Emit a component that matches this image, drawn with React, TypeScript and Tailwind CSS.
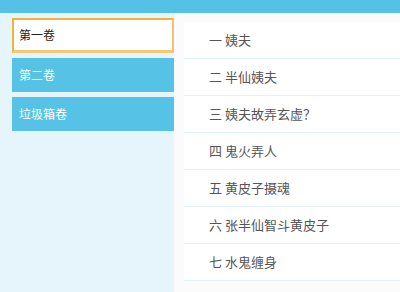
import React from "react";

const chapters = [
  "一 姨夫",
  "二 半仙姨夫",
  "三 姨夫故弄玄虚？",
  "四 鬼火弄人",
  "五 黄皮子摄魂",
  "六 张半仙智斗黄皮子",
  "七 水鬼缠身",
];

export default function App() {
  return (
    <div
      className="w-[400px] h-[292px] overflow-hidden bg-white"
      style={{ fontFamily: '"Noto Sans CJK SC", "Noto Sans", sans-serif' }}
    >
      <div className="h-[13px] bg-[#55c1e6]" />
      <div className="flex h-[279px]">
        <div className="w-[174px] bg-[#e5f5fb] pl-[12px] pt-[5px] flex flex-col gap-[5px]">
          <div className="h-[35px] bg-white border-t-2 border-l-2 border-r-2 border-b-[3px] border-t-[#f1b33c] border-l-[#f1b33c] border-r-[#f3c170] border-b-[#f5c878] flex items-center pl-[5px] text-[12px] text-[#222]">
            第一卷
          </div>
          <div className="h-[34px] bg-[#56c3e6] flex items-center pl-[7px] text-[12px] text-white">
            第二卷
          </div>
          <div className="h-[34px] bg-[#56c3e6] flex items-center pl-[7px] text-[12px] text-white">
            垃圾箱卷
          </div>
        </div>
        <div className="flex-1 bg-[#fbfbfb] pl-[10px] pt-[9px]">
          {chapters.map((c) => (
            <div
              key={c}
              className="h-[37px] bg-white border-b border-[#e2f2f8] flex items-center pl-[25px] text-[13px] text-[#555] whitespace-pre"
            >
              {c}
            </div>
          ))}
        </div>
      </div>
    </div>
  );
}
